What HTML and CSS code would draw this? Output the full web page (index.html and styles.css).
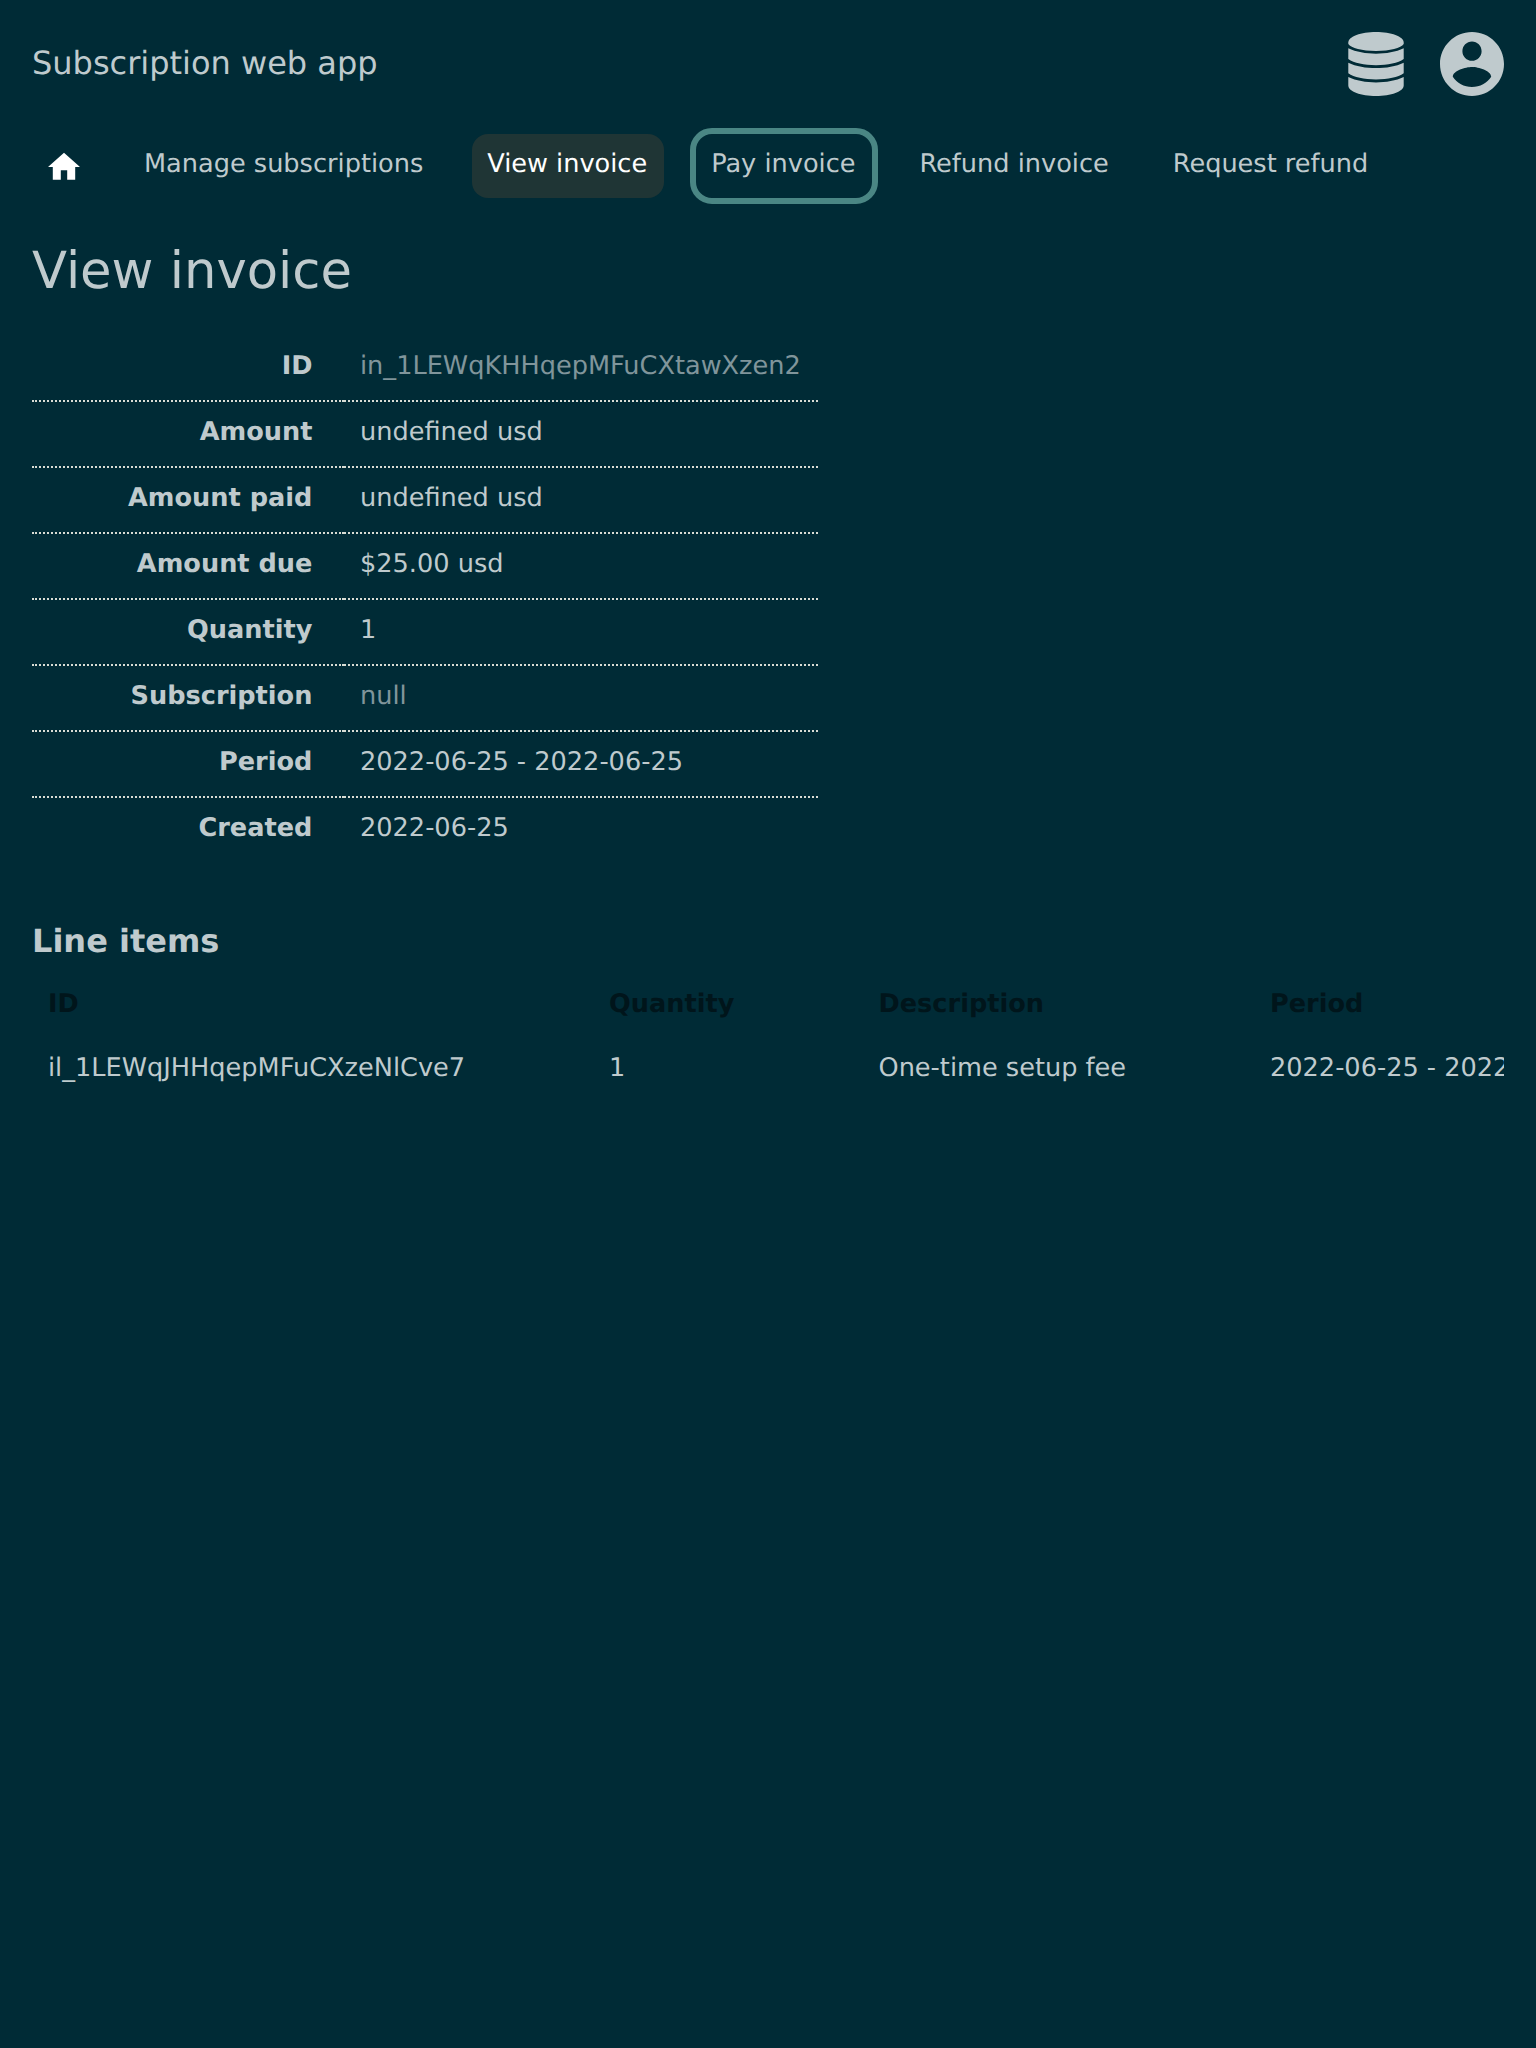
FILE: index.html
```html
<!DOCTYPE html>
<html lang="en">
<head>
<meta charset="utf-8">
<title>View invoice</title>
<link rel="stylesheet" href="styles.css">
</head>
<body>
<header class="header">
  <span class="app-name">Subscription web app</span>
  <div class="menus">
    <svg class="icon-database" viewBox="0 0 56 64">
      <path d="M0.300 10.500C0.300 4.500 13 0 28 0S55.700 4.500 55.700 10.500V12C53 16 42 19 28 19S3 16 0.300 12Z"/>
      <path d="M0.300 16.300C8 20 18 21.700 28 21.700S48 20 55.700 16.300V27C50 31 40 33.200 28 33.200S6 31 0.300 27Z"/>
      <path d="M0.300 30.700C8 34.400 18 36.100 28 36.100S48 34.400 55.700 30.700V41.200C50 45.200 40 47.400 28 47.400S6 45.200 0.300 41.200Z"/>
      <path d="M0.300 45C8 48.700 18 50.400 28 50.400S48 48.700 55.700 45V53.500C55.700 59.500 43 64 28 64S0.300 59.500 0.300 53.500Z"/>
    </svg>
    <svg class="icon-account" viewBox="2 2 20 20">
      <path d="M12 2C6.480 2 2 6.480 2 12s4.480 10 10 10 10-4.480 10-10S17.520 2 12 2zm0 3c1.660 0 3 1.340 3 3s-1.340 3-3 3-3-1.340-3-3 1.340-3 3-3zm0 14.200c-2.500 0-4.710-1.280-6-3.220.03-1.990 4-3.080 6-3.080 1.990 0 5.970 1.090 6 3.080-1.290 1.940-3.500 3.220-6 3.220z"/>
    </svg>
  </div>
</header>
<nav class="nav">
  <a class="nav-link nav-home"><svg class="icon-home" viewBox="2 2.6 20 17.5"><path d="M10 20v-6h4v6h5v-8h3L12 3 2 12h3v8z"/></svg></a>
  <a class="nav-link">Manage subscriptions</a>
  <a class="nav-link active">View invoice</a>
  <a class="nav-link focused">Pay invoice</a>
  <a class="nav-link">Refund invoice</a>
  <a class="nav-link">Request refund</a>
</nav>
<main class="content">
  <h1 class="page-title">View invoice</h1>
  <table class="details">
    <tr><th>ID</th><td class="muted">in_1LEWqKHHqepMFuCXtawXzen2</td></tr>
    <tr><th>Amount</th><td>undefined usd</td></tr>
    <tr><th>Amount paid</th><td>undefined usd</td></tr>
    <tr><th>Amount due</th><td>$25.00 usd</td></tr>
    <tr><th>Quantity</th><td>1</td></tr>
    <tr><th>Subscription</th><td class="muted">null</td></tr>
    <tr><th>Period</th><td>2022-06-25 - 2022-06-25</td></tr>
    <tr><th>Created</th><td>2022-06-25</td></tr>
  </table>
  <h2 class="section-title">Line items</h2>
  <div class="table-scroll">
    <table class="items">
      <tr><th class="col-id">ID</th><th class="col-quantity">Quantity</th><th class="col-description">Description</th><th class="col-period">Period</th></tr>
      <tr><td>il_1LEWqJHHqepMFuCXzeNlCve7</td><td>1</td><td>One-time setup fee</td><td>2022-06-25 - 2022-06-25</td></tr>
    </table>
  </div>
</main>
</body>
</html>
```

FILE: styles.css
```css
* { box-sizing: border-box; }

body {
  margin: 0;
  padding: 32px;
  min-height: 100vh;
  background: #002b36;
  color: #bfcacd;
  font-family: "DejaVu Sans", sans-serif;
  font-size: 25.6px;
  text-rendering: geometricPrecision;
}

svg { display: block; fill: currentColor; }

.header {
  display: flex;
  justify-content: space-between;
  height: 64px;
}
.app-name { font-size: 32px; line-height: 62px; }
.menus { display: flex; gap: 36px; }
.icon-database { width: 56px; height: 64px; }
.icon-account { width: 64px; height: 64px; }

.nav { display: flex; gap: 32px; margin-top: 38px; }
.nav-link {
  height: 64px;
  padding: 0 16px;
  border-radius: 16px;
  line-height: 60px;
  white-space: nowrap;
}
.nav-home { padding-top: 18px; color: #fff; }
.icon-home { width: 32px; height: 28px; }
.active,
.focused {
  margin: 0 -0.6px 0 0.6px;
  padding: 0 16.6px 0 15.4px;
}
.active { background: #1f3535; color: #fff; }
.focused { outline: 6px solid #4a8684; }

.page-title {
  margin: 40px 0 0;
  font-size: 51.2px;
  font-weight: 400;
  line-height: 66px;
}

.details {
  width: 786px;
  margin-top: 31px;
  border-collapse: collapse;
  table-layout: fixed;
}
.details th,
.details td {
  height: 66px;
  padding: 0 16px 4px;
  line-height: 60px;
  border-bottom: 2px dotted #d8dcd4;
  white-space: nowrap;
}
.details th { width: 312px; padding-right: 31.6px; text-align: right; }
.details td { text-align: left; }
.details tr:last-child > * {
  padding-bottom: 6px;
  border-bottom: 0;
  line-height: 58px;
}
.details .muted { color: #80959b; }

.section-title {
  margin: 54px 0 0;
  font-size: 32px;
  line-height: 48px;
}

.table-scroll { margin-top: 9px; overflow: hidden; }
.items {
  width: 1586px;
  border-collapse: collapse;
  table-layout: fixed;
}
.items th,
.items td {
  height: 64px;
  padding: 0 16px 4px;
  text-align: left;
  line-height: 60px;
  white-space: nowrap;
}
.items th { color: #00151b; }
.col-id { width: 561px; }
.col-quantity { width: 269.500px; }
.col-description { width: 391.500px; }
.col-period { width: 364px; }
```
